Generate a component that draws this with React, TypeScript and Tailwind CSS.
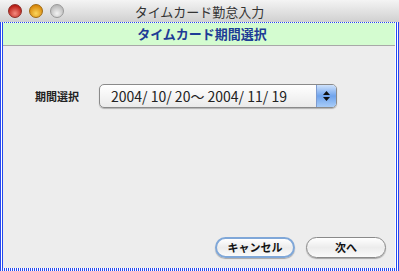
import React from 'react';

const Light = ({ from, to, edge }: { from: string; to: string; edge: string }) => (
  <div
    className="w-[14px] h-[14px] rounded-full border"
    style={{ background: `radial-gradient(circle at 50% 70%, ${to}, ${from} 75%)`, borderColor: edge }}
  />
);

const App: React.FC = () => {
  return (
    <div
      className="w-[399px] h-[271px] flex flex-col bg-[#ececec] overflow-hidden"
      style={{ fontFamily: '"Noto Sans CJK JP", "Liberation Sans", sans-serif' }}
    >
      {/* title bar */}
      <div className="relative h-[22px] flex items-center bg-gradient-to-b from-[#f4f4f4] to-[#d0d0d0]">
        <div className="flex items-center gap-[7px] pl-[8px]">
          <Light from="#b81c14" to="#f58a7e" edge="#8c2a24" />
          <Light from="#d8870a" to="#fbd65c" edge="#a06a10" />
          <Light from="#b9b9b9" to="#f3f3f3" edge="#999999" />
        </div>
        <div className="absolute inset-0 flex items-center justify-center text-[13px] text-[#333] leading-none pt-[1px]">
          タイムカード勤怠入力
        </div>
      </div>

      {/* window frame, blue/white checker like the old drag border */}
      <div className="flex-1 flex flex-col pt-[1px] pl-[3px] pr-[4px] pb-[3px] bg-[#8398ec] bg-[linear-gradient(90deg,#2448f0_50%,#ffffff_50%),linear-gradient(90deg,#ffffff_50%,#2448f0_50%)] bg-[length:2px_2px] bg-[position:0_0,0_1px] bg-repeat">
        <div className="flex-1 flex flex-col bg-[#ededed]">
          <div className="h-[23px] flex items-center justify-center bg-[#d4fcd0] border-b border-[#a8a8a8] text-[13px] font-bold text-[#1e3c96] pl-[6px]">
            タイムカード期間選択
          </div>

          <div className="flex items-center mt-[38px] pl-[32px]">
            <span className="text-[11px] font-bold text-[#222]">期間選択</span>
            <div className="ml-[20px] w-[238px] h-[24px] flex rounded-[5px] border border-[#8a8a8a] bg-gradient-to-b from-[#ffffff] to-[#eaeaea] overflow-hidden shadow-[0_1px_1px_rgba(0,0,0,0.25)]">
              <div className="flex-1 flex items-center pl-[11px] text-[14px] text-[#222]">
                2004/ 10/ 20〜 2004/ 11/ 19
              </div>
              <div className="w-[20px] flex flex-col items-center justify-center gap-[2px] bg-gradient-to-b from-[#cfe2fb] via-[#6fa3ec] to-[#a8ccf7] border-l border-[#7d9bd0]">
                <svg width="7" height="4" viewBox="0 0 7 4"><path d="M3.5 0L7 4H0z" fill="#111" /></svg>
                <svg width="7" height="4" viewBox="0 0 7 4"><path d="M0 0h7L3.5 4z" fill="#111" /></svg>
              </div>
            </div>
          </div>

          <div className="flex-1" />

          <div className="flex justify-end gap-[11px] pr-[9px] pb-[10px]">
            <button className="w-[80px] h-[21px] rounded-full border-2 border-[#7fa7d8] bg-gradient-to-b from-[#ffffff] via-[#ececec] to-[#fafafa] text-[11px] font-bold text-[#111] flex items-center justify-center shadow-[0_1px_1px_rgba(0,0,0,0.3)]">
              キャンセル
            </button>
            <button className="w-[80px] h-[21px] rounded-full border border-[#8a8a8a] bg-gradient-to-b from-[#ffffff] via-[#ececec] to-[#fafafa] text-[11px] font-bold text-[#111] flex items-center justify-center shadow-[0_1px_1px_rgba(0,0,0,0.3)]">
              次へ
            </button>
          </div>
        </div>
      </div>
    </div>
  );
};

export default App;
